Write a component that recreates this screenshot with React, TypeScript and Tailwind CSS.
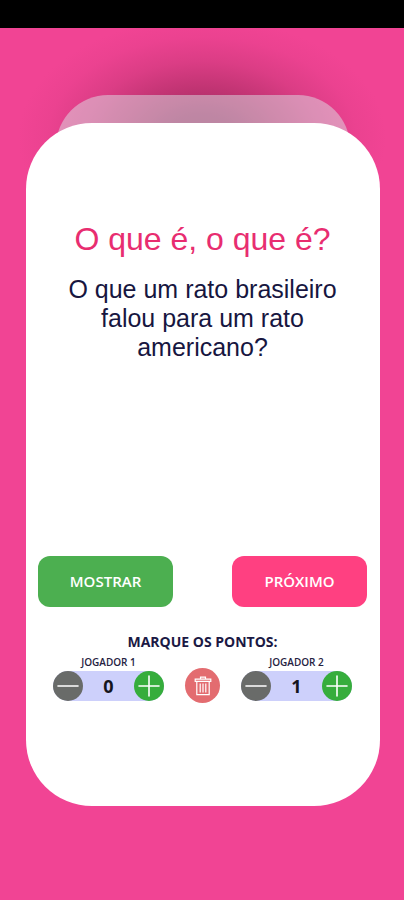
import { useState } from "react";

function RoundButton({
  label,
  tone,
  onClick,
  children,
}: {
  label: string;
  tone: string;
  onClick: () => void;
  children: React.ReactNode;
}) {
  return (
    <button
      type="button"
      aria-label={label}
      onClick={onClick}
      className={`flex size-[30px] shrink-0 items-center justify-center rounded-full text-white ${tone}`}
    >
      <svg viewBox="0 0 30 30" className="size-full" fill="none" stroke="currentColor" strokeWidth="1.6" strokeLinecap="round">
        {children}
      </svg>
    </button>
  );
}

function Counter({ name, start }: { name: string; start: number }) {
  const [points, setPoints] = useState(start);
  return (
    <div className="flex w-[111px] flex-col items-center gap-[3px]">
      <span className="text-[10px] leading-3 font-semibold text-[#24223f]">{name}</span>
      <div className="flex w-full items-center justify-between rounded-full bg-[#cdd0fb]">
        <RoundButton label={`Remover ponto: ${name}`} tone="bg-[#696b69]" onClick={() => setPoints(points - 1)}>
          <path d="M5 15h20" />
        </RoundButton>
        <output className="text-lg leading-[30px] font-bold text-[#15151d]">{points}</output>
        <RoundButton label={`Adicionar ponto: ${name}`} tone="bg-[#36ad3c]" onClick={() => setPoints(points + 1)}>
          <path d="M5 15h20M15 5v20" />
        </RoundButton>
      </div>
    </div>
  );
}

export default function App() {
  const [round, setRound] = useState({ id: 0, first: 0, second: 1 });
  return (
    <div className="flex min-h-screen flex-col bg-[#f14494] font-['Open_Sans','Noto_Sans',sans-serif]">
      <div className="h-7 bg-black" />
      <main className="flex grow flex-col bg-[radial-gradient(ellipse_184px_120px_at_50%_110px,#982c5e_0%,#a42d64_20%,#c13473_42%,#db3d85_64%,#eb4290_84%,#f14494_100%)] bg-no-repeat pt-[95px] pr-6 pb-[94px] pl-[26px]">
        <div className="relative flex grow flex-col">
          <div className="absolute inset-x-[30px] -top-7 h-24 rounded-t-[52px] bg-[#dcecec]/47" />
          <section className="relative flex grow flex-col rounded-[66px] bg-white pt-[98px] pr-[13px] pb-[105px] pl-3">
            <div className="px-7 text-center font-['Liberation_Sans',Arial,sans-serif]">
              <h1 className="text-[32px] leading-9 text-[#e82d70]">O que é, o que é?</h1>
              <p className="mt-[18px] text-[25px] leading-[29px] text-[#17163f]">
                O que um rato brasileiro falou para um rato americano?
              </p>
            </div>
            <div className="mt-auto flex justify-between">
              <button type="button" className="h-[51px] w-[135px] rounded-xl bg-[#4caf50] text-[15px] font-semibold text-white">
                MOSTRAR
              </button>
              <button type="button" className="h-[51px] w-[135px] rounded-xl bg-[#ff4081] text-[15px] font-semibold text-white">
                PRÓXIMO
              </button>
            </div>
            <h2 className="mt-[25px] text-center text-sm leading-5 font-bold text-[#1b1944]">MARQUE OS PONTOS:</h2>
            <div key={round.id} className="mt-1 flex items-end justify-center gap-[21px]">
              <Counter name="JOGADOR 1" start={round.first} />
              <button
                type="button"
                aria-label="Zerar pontos"
                onClick={() => setRound({ id: round.id + 1, first: 0, second: 0 })}
                className="-mb-[2px] flex size-[35px] items-center justify-center rounded-full bg-[#e36c70] text-white"
              >
                <svg viewBox="0 0 18 20" className="h-5 w-[18px]" fill="none" stroke="currentColor" strokeWidth="1.2">
                  <path d="M1.2 3.2h15.6v2.2H1.2zM6.5 3V1.2h5V3M2.8 5.6v13h12.4v-13M6.2 7.6v8.8M9 7.6v8.8M11.8 7.6v8.8" />
                </svg>
              </button>
              <Counter name="JOGADOR 2" start={round.second} />
            </div>
          </section>
        </div>
      </main>
    </div>
  );
}
